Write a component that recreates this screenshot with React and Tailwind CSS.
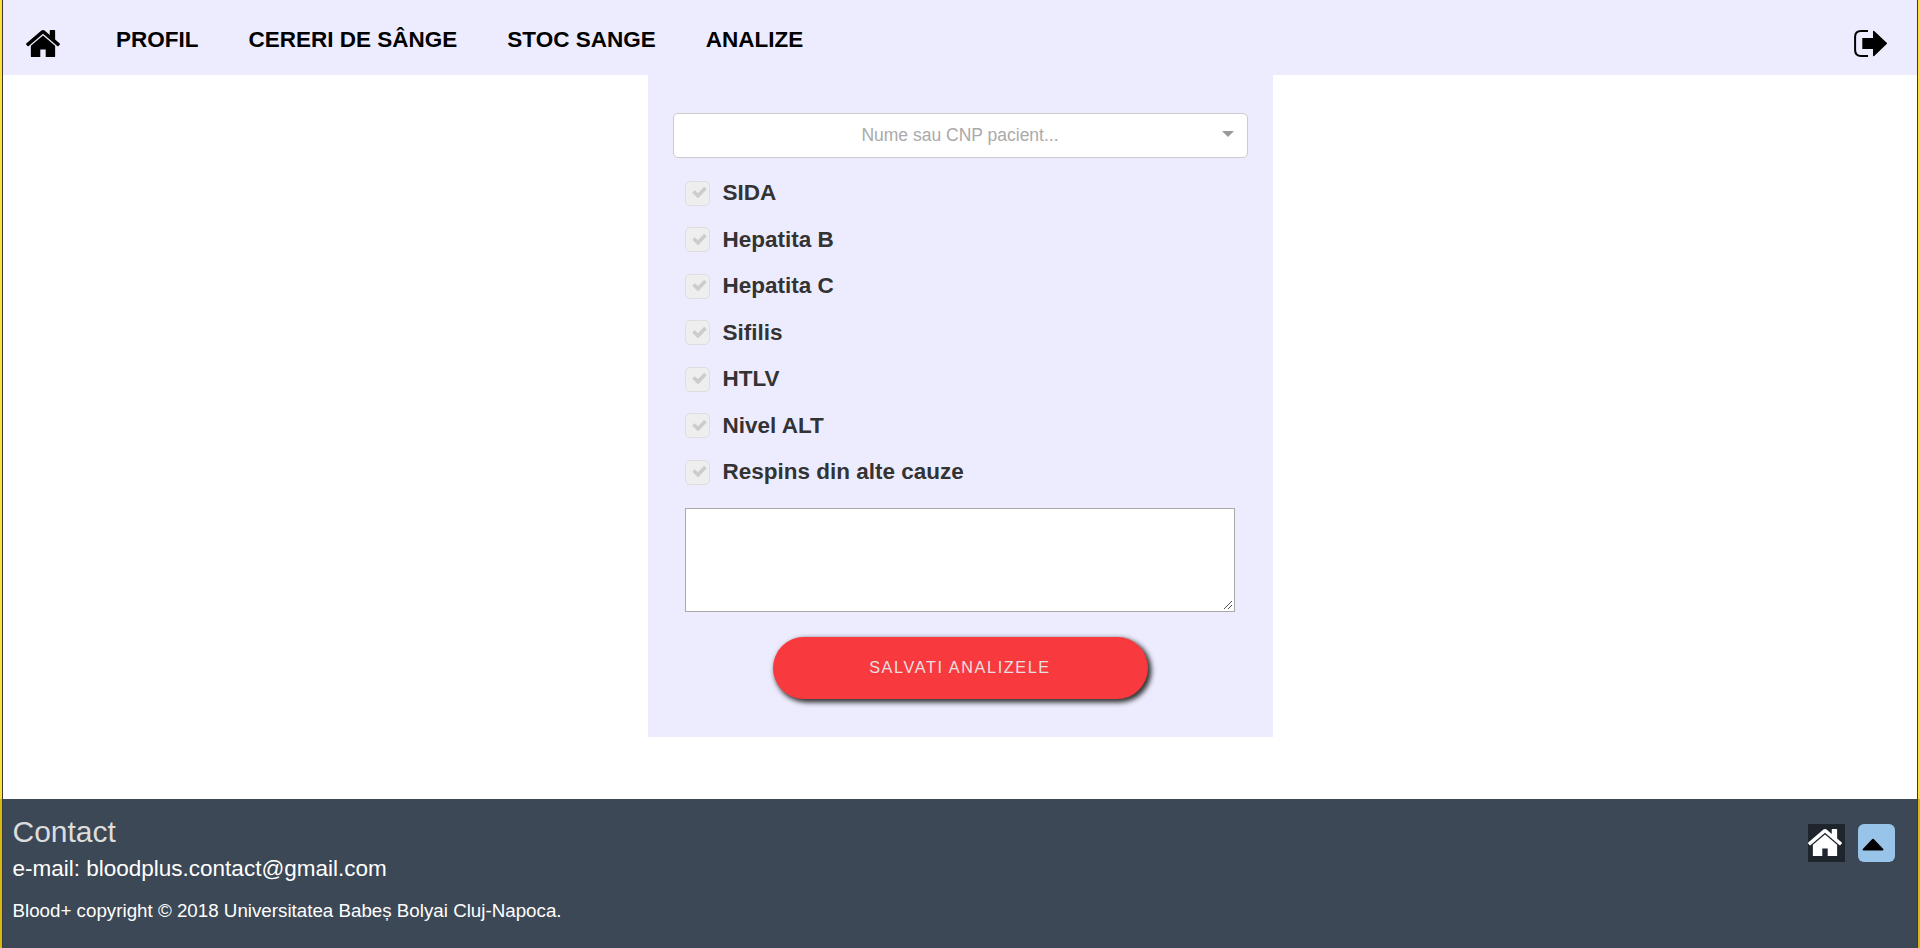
import React from "react";

const TESTS = [
  "SIDA",
  "Hepatita B",
  "Hepatita C",
  "Sifilis",
  "HTLV",
  "Nivel ALT",
  "Respins din alte cauze",
];

const LINKS = ["PROFIL", "CERERI DE SÂNGE", "STOC SANGE", "ANALIZE"];

function HomeIcon({ className }) {
  return (
    <svg viewBox="25 29 1614 1251" preserveAspectRatio="none" fill="currentColor" className={className}>
      <path d="M1408 768v480q0 26-19 45t-45 19H960V928H704v384H320q-26 0-45-19t-19-45V768q0-1 .5-3t.5-3l575-474 575 474q1 2 1 6zm223-69l-62 74q-8 9-21 11h-3q-13 0-21-7L832 200 140 777q-12 8-24 7-13-2-21-11l-62-74q-8-10-7-23.500t11-21.500L756 55q32-26 76-26t76 26l244 204V64q0-14 9-23t23-9h192q14 0 23 9t9 23v408l219 182q10 8 11 21.500t-7 23.500z" />
    </svg>
  );
}

function SignOutIcon({ className }) {
  return (
    <svg viewBox="0 0 33 27" fill="currentColor" className={className}>
      <path d="M14 1H7Q1.100 1 1.100 7V20Q1.100 26 7 26H14" fill="none" stroke="currentColor" strokeWidth="2" />
      <path d="M8.300 8H19V1.300Q19 .2 20.200 .9L32.700 12.700Q33.300 13.400 32.700 14.100L20.200 25.900Q19 26.600 19 25.600V19H8.300Z" />
    </svg>
  );
}

function Check({ label }) {
  return (
    <label className="flex h-[46.5px] items-center">
      <span className="flex size-[25px] items-center justify-center rounded-[5px] border border-[#dedede] bg-[#eeeeee] pb-0.5 pl-[4px]">
        <svg viewBox="0 0 15 12" className="h-3 w-[15px]">
          <path d="M1.500 5.500L6 9.800L13.500 2" fill="none" stroke="#cccccc" strokeWidth="3.600" />
        </svg>
      </span>
      <span className="ml-[13px] text-[22.5px] font-bold leading-7 text-[#333333]">{label}</span>
    </label>
  );
}

export default function App() {
  return (
    <div className="flex h-[948px] w-full bg-white font-['Liberation_Sans',Arial,sans-serif]">
      <div className="flex w-[3px] shrink-0 flex-col border-r border-[#3a3a3a]">
        <div className="h-[799px] bg-[#ffe03a]" />
        <div className="flex-1 bg-[#d6b915]" />
      </div>

      <div className="flex min-w-0 flex-1 flex-col">
        <header className="flex h-[75px] shrink-0 items-start justify-between bg-[#edecff] pl-[23px] pr-[30px]">
          <nav className="flex">
            <HomeIcon className="mt-[30px] h-[27px] w-[34px] text-black" />
            <ul className="ml-[56px] mt-[26px] flex gap-[50px] text-[22.5px] font-bold leading-7 text-black">
              {LINKS.map((l) => (
                <li key={l}>{l}</li>
              ))}
            </ul>
          </nav>
          <SignOutIcon className="mt-[30px] h-[27px] w-[33px] text-black" />
        </header>

        <main className="flex flex-1 justify-center">
          <form className="flex h-[662px] w-[625px] flex-col bg-[#edecff] px-[25px] pt-[38px]">
            <div className="flex h-[45px] shrink-0 items-center rounded-[5px] border border-[#cccccc] bg-white pr-[13px]">
              <span className="flex-1 pl-[13px] text-center text-[17.5px] text-[#aaaaaa]">Nume sau CNP pacient...</span>
              <svg viewBox="0 0 12 6" className="-ml-3 -mt-1 h-1.5 w-3">
                <path d="M0 0H12L6 6Z" fill="#999999" />
              </svg>
            </div>
            <div className="mt-[12px] flex flex-col px-[12px]">
              {TESTS.map((t) => (
                <Check key={t} label={t} />
              ))}
            </div>
            <div className="relative ml-[12px] mt-[12.5px] h-[104px] w-[550px] shrink-0">
              <textarea className="block h-full w-full resize-none border border-[#a9a9a9] bg-white" />
              <svg viewBox="0 0 8 8" className="pointer-events-none absolute bottom-[3px] right-[3px] size-2">
                <path d="M0 8L8 0M4 8L8 4" stroke="#555555" strokeWidth="1" />
              </svg>
            </div>
            <button
              type="button"
              className="mt-[25px] h-[62px] w-[375px] shrink-0 self-center rounded-full bg-[#f8393e] pb-0.5 text-[16.25px] tracking-[1.6px] text-[#e8e0e0] shadow-[2.5px_2.5px_5px_1px_#333333]"
            >
              SALVATI ANALIZELE
            </button>
          </form>
        </main>

        <footer className="flex h-[149px] shrink-0 justify-between bg-[#3c4855] pl-[9.5px] pr-[22px]">
          <div>
            <h2 className="mt-[16px] text-[30px] leading-[34px] text-[#dddddd]">Contact</h2>
            <p className="mt-[7px] text-[22.5px] leading-[26px] text-white">e-mail: bloodplus.contact@gmail.com</p>
            <p className="mt-[18px] text-[18.75px] leading-[22px] text-white">
              Blood+ copyright © 2018 Universitatea Babeș Bolyai Cluj-Napoca.
            </p>
          </div>
          <div className="mt-[25px] flex h-[38px] gap-[13px]">
            <a className="h-[38px] w-[37px] bg-[#1e252c] pt-[5px] text-white">
              <HomeIcon className="h-[27px] w-[34px]" />
            </a>
            <a className="flex h-[38px] w-[37px] justify-start rounded-[6px] bg-[#99c4ea] pl-1 pt-[14px]">
              <svg viewBox="0 0 22 13" className="h-[13px] w-[22px]">
                <path d="M1.500 12.500Q0 12.300 .8 11L10.300 1Q11 .3 11.700 1L21.300 11Q22 12.300 20.500 12.500Z" fill="#000000" />
              </svg>
            </a>
          </div>
        </footer>
      </div>

      <div className="flex w-[3px] shrink-0 flex-col border-l border-[#3a3a3a]">
        <div className="h-[799px] bg-[#ffe03a]" />
        <div className="flex-1 bg-[#d6b915]" />
      </div>
    </div>
  );
}
